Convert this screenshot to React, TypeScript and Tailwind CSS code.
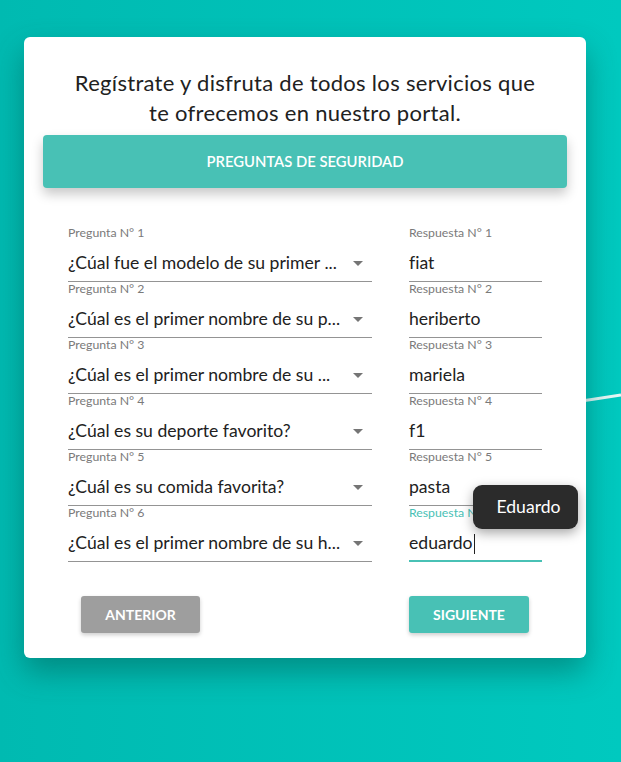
import React from 'react';

const rows = [
  { q: '¿Cúal fue el modelo de su primer ...', a: 'fiat' },
  { q: '¿Cúal es el primer nombre de su p...', a: 'heriberto' },
  { q: '¿Cúal es el primer nombre de su ...', a: 'mariela' },
  { q: '¿Cúal es su deporte favorito?', a: 'f1' },
  { q: '¿Cuál es su comida favorita?', a: 'pasta' },
  { q: '¿Cúal es el primer nombre de su h...', a: 'eduardo' },
];

function Arrow() {
  return (
    <svg width="10" height="5" viewBox="0 0 10 5" className="shrink-0">
      <path d="M0 0 L10 0 L5 5 Z" fill="#757575" />
    </svg>
  );
}

export default function App() {
  return (
    <div
      className="relative min-h-[762px] overflow-hidden bg-gradient-to-r from-[#00bab1] to-[#00c9bf] pt-[37px] [font-variant-ligatures:none]"
      style={{ fontFamily: 'Lato, "Noto Sans", sans-serif' }}
    >
      {/* decorative line behind the card */}
      <svg className="absolute left-0 top-0" width="621" height="762">
        <path d="M560 404 Q590 400 621 395" stroke="#e6f7f6" strokeWidth="3" fill="none" />
      </svg>

      <div className="relative ml-[24px] w-[562px] rounded-md bg-white px-[19px] pb-[25px] pt-[31px] shadow-[0_14px_30px_rgba(0,80,70,0.45)]">
        <h1 className="text-center text-[22px] leading-[30px] tracking-[0.3px] text-[#212121]">
          Regístrate y disfruta de todos los servicios que
          <br />
          te ofrecemos en nuestro portal.
        </h1>

        <div className="mt-[7px] flex h-[53px] items-center justify-center rounded-[4px] bg-[#48c1b5] text-[14.8px] font-semibold text-white shadow-[0_6px_12px_rgba(0,0,0,0.22)]">
          PREGUNTAS DE SEGURIDAD
        </div>

        <div className="mt-[38px] flex flex-col">
          {rows.map((r, i) => {
            const active = i === rows.length - 1;
            return (
              <div key={i} className="flex pl-[25px]">
                <div className="w-[304px]">
                  <div className="h-[14px] text-[12.3px] leading-[14px] text-[#7a7a7a]">Pregunta N° {i + 1}</div>
                  <div className="flex h-[42px] items-center justify-between border-b border-[#949494] pb-[1px] pr-[9px] pt-[7px]">
                    <span className="text-[17.6px] text-[#212121]">{r.q}</span>
                    <Arrow />
                  </div>
                </div>
                <div className="ml-[37px] w-[133px]">
                  <div
                    className={`h-[14px] text-[12.3px] leading-[14px] ${active ? 'text-[#48c1b5]' : 'text-[#7a7a7a]'}`}
                  >
                    Respuesta N° {i + 1}
                  </div>
                  <div
                    className={`flex h-[42px] items-center pt-[7px] ${active ? 'border-b-2 border-[#48c1b5]' : 'border-b border-[#949494] pb-[1px]'}`}
                  >
                    <span className="text-[17.6px] text-[#212121]">{r.a}</span>
                    {active && <span className="ml-[1px] h-[20px] w-[1px] bg-[#212121]" />}
                  </div>
                </div>
              </div>
            );
          })}
        </div>

        <div className="mt-[34px] flex">
          <button className="ml-[38px] h-[37px] w-[119px] rounded-[3px] bg-[#9e9e9e] text-[14px] font-bold text-white shadow-[0_2px_4px_rgba(0,0,0,0.2)]">
            ANTERIOR
          </button>
          <button className="ml-[209px] h-[37px] w-[120px] rounded-[3px] bg-[#48c1b5] text-[14px] font-bold text-white shadow-[0_2px_4px_rgba(0,0,0,0.2)]">
            SIGUIENTE
          </button>
        </div>

        {/* autocomplete tooltip */}
        <div className="absolute left-[449px] top-[448px] flex h-[44px] w-[105px] items-center justify-center rounded-[9px] bg-[#2b2b2b] pl-[6px] text-[17.6px] text-white shadow-[0_4px_12px_rgba(0,0,0,0.35)]">
          Eduardo
        </div>
      </div>
    </div>
  );
}
